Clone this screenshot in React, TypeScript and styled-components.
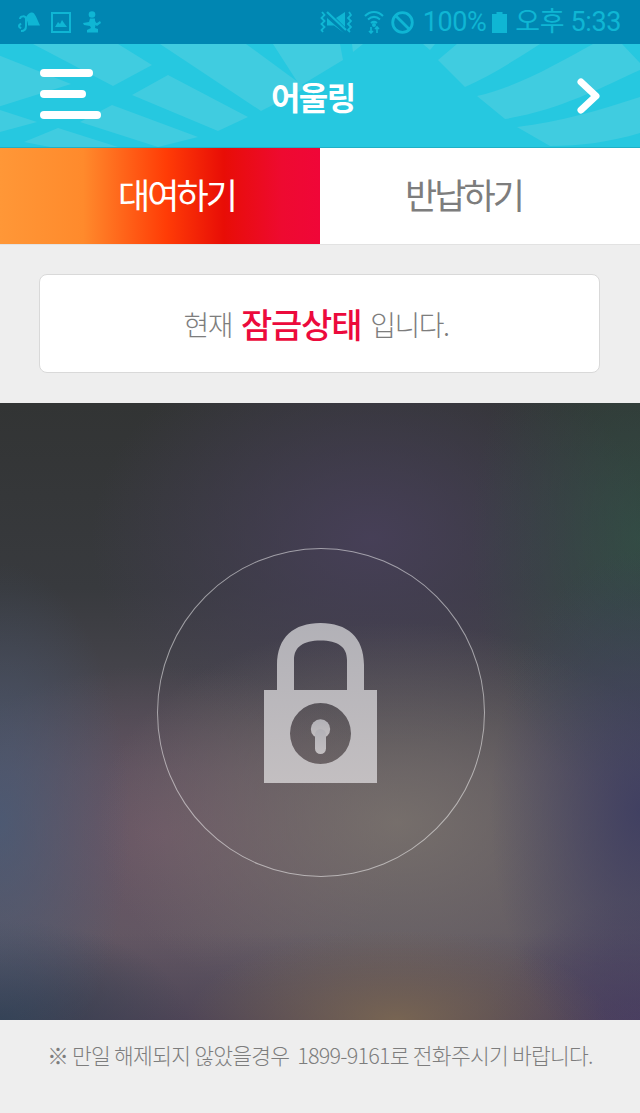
import React from "react";
import styled, { createGlobalStyle } from "styled-components";

const GlobalStyle = createGlobalStyle`
  html, body {
    margin: 0;
    padding: 0;
    background: #eeeeee;
  }
  * {
    box-sizing: border-box;
  }
`;

const Page = styled.div`
  width: 640px;
  height: 1113px;
  display: flex;
  flex-direction: column;
  overflow: hidden;
  background: #eeeeee;
  font-family: "Noto Sans CJK KR", "Noto Sans", sans-serif;
`;

const StatusBar = styled.div`
  height: 44px;
  flex: none;
  display: flex;
  align-items: center;
  justify-content: space-between;
  padding: 0 19px 0 18px;
  background: #0086b2;
  color: #0fb6d4;
`;

const StatusGroup = styled.div<{ $gap: number; $mr?: number }>`
  display: flex;
  align-items: center;
  gap: ${(p) => p.$gap}px;
  margin-right: ${(p) => p.$mr ?? 0}px;
`;

const StatusText = styled.span`
  font-family: Roboto, "Noto Sans CJK KR", sans-serif;
  font-size: 27px;
  line-height: 44px;
  white-space: nowrap;
  letter-spacing: -0.4px;
`;

const BatteryIcon = styled.svg`
  margin: 0 3px 0 1px;
`;

const Header = styled.header`
  position: relative;
  height: 104px;
  flex: none;
  display: flex;
  align-items: center;
  padding: 0 40px;
  background: #26c8e0;
  border-bottom: 1px solid #1fb0c6;
  overflow: hidden;
`;

const Pattern = styled.svg`
  position: absolute;
  left: 0;
  top: 0;
`;

const MenuButton = styled.div`
  position: relative;
  width: 61px;
  margin-top: -3px;
  display: flex;
  flex-direction: column;
  gap: 13px;
`;

const MenuBar = styled.span<{ $w: number }>`
  display: block;
  width: ${(p) => p.$w}px;
  height: 8px;
  border-radius: 4px;
  background: #ffffff;
`;

const Title = styled.h1`
  position: relative;
  margin: 0 0 0 170px;
  color: #ffffff;
  font-size: 32px;
  font-weight: 700;
  letter-spacing: -1.6px;
  line-height: 44px;
`;

const NextIcon = styled.svg`
  position: relative;
  margin: 0 -1px 0 auto;
`;

const Tabs = styled.div`
  height: 97px;
  flex: none;
  display: flex;
  border-bottom: 1px solid #e2e2e2;
`;

const Tab = styled.div<{ $active?: boolean }>`
  width: 320px;
  height: 96px;
  padding: ${(p) => (p.$active ? "0 0 5px 33px" : "0 33px 5px 0")};
  display: flex;
  align-items: center;
  justify-content: center;
  font-size: 35px;
  font-weight: 400;
  letter-spacing: -3px;
  color: ${(p) => (p.$active ? "#ffffff" : "#7d7d7d")};
  background: ${(p) =>
    p.$active
      ? "linear-gradient(90deg, #ff9737 0%, #ff8a2c 26%, #ff3c06 52%, #e80d06 70%, #ee0a30 88%, #f00638 100%)"
      : "#ffffff"};
`;

const NoticeArea = styled.div`
  height: 158px;
  flex: none;
  padding: 29px 40px 30px 39px;
`;

const NoticeCard = styled.div`
  height: 99px;
  padding-right: 7px;
  display: flex;
  align-items: center;
  justify-content: center;
  gap: 9px;
  background: #ffffff;
  border: 1px solid #d9d9d9;
  border-radius: 8px;
  color: #7d7d7d;
  font-size: 28px;
  font-weight: 300;
  letter-spacing: -1.5px;
`;

const LockedLabel = styled.strong`
  color: #ec0a3c;
  font-size: 34px;
  font-weight: 500;
  letter-spacing: -1.2px;
`;

const Photo = styled.div`
  height: 617px;
  flex: none;
  display: flex;
  align-items: center;
  justify-content: center;
  background:
    radial-gradient(ellipse 130px 260px at 0% 68%, rgba(70, 92, 122, 0.7) 0%, rgba(70, 92, 122, 0.3) 55%, transparent 100%),
    radial-gradient(ellipse 150px 260px at 100% 66%, rgba(62, 62, 98, 0.9) 0%, rgba(62, 62, 98, 0.4) 55%, transparent 100%),
    radial-gradient(ellipse 170px 260px at 100% 22%, rgba(48, 88, 74, 0.6) 0%, rgba(48, 88, 74, 0.25) 55%, transparent 100%),
    radial-gradient(ellipse 210px 90px at 62% 100%, rgba(124, 104, 82, 0.9) 0%, rgba(124, 104, 82, 0.4) 55%, transparent 100%),
    radial-gradient(ellipse 150px 120px at 100% 100%, rgba(76, 62, 98, 0.85) 0%, rgba(76, 62, 98, 0.35) 55%, transparent 100%),
    radial-gradient(ellipse 190px 100px at 0% 100%, rgba(48, 62, 80, 0.95) 0%, rgba(48, 62, 80, 0.4) 55%, transparent 100%),
    linear-gradient(0deg, rgba(72, 62, 82, 0.75) 0%, transparent 14%),
    radial-gradient(ellipse 300px 200px at 62% 68%, rgba(128, 120, 112, 0.75) 0%, rgba(128, 120, 112, 0.35) 55%, transparent 100%),
    radial-gradient(ellipse 250px 170px at 25% 70%, rgba(112, 88, 104, 0.8) 0%, rgba(112, 88, 104, 0.35) 55%, transparent 100%),
    radial-gradient(ellipse 280px 210px at 58% 22%, rgba(72, 64, 90, 0.9) 0%, rgba(72, 64, 90, 0.4) 55%, transparent 100%),
    linear-gradient(180deg, #323434 0%, #383a3e 30%, #544f5a 60%, #625a64 100%);
`;

const LockRing = styled.div`
  width: 328px;
  height: 329px;
  margin: 1px 0 0 2px;
  display: flex;
  align-items: center;
  justify-content: center;
  border: 1px solid rgba(255, 255, 255, 0.5);
  border-radius: 50%;
`;

const LockIcon = styled.svg`
  margin: 0 1px 18px 0;
`;

const Footer = styled.footer`
  flex: 1;
  padding-top: 19px;
  text-align: center;
  color: #7d7d7d;
  font-size: 21.5px;
  font-weight: 300;
  line-height: 32px;
  letter-spacing: -0.75px;
  white-space: nowrap;
`;

const headerShapes = [
  "M33 44 L118 44 L152 65 L113 86 Z",
  "M-2 55 L71 84 L-2 107 Z",
  "M160 44 L246 44 L306 88 L261 111 Z",
  "M273 44 L340 44 L343 60 L300 86 Z",
  "M132 95 L168 75 L248 117 L218 131 Z",
  "M0 110 L37 122 L0 132 Z",
  "M80 122 L112 105 L198 137 L158 147 Z",
  "M24 142 L58 128 L118 147 L50 147 Z",
  "M352 44 L363 44 L353 52 Z",
  "M423 44 L435 44 L430 50 Z",
  "M438 60 L457 44 L540 44 C515 60 490 76 465 87 Z",
  "M477 96 C520 86 560 62 593 44 L622 44 L640 63 L640 70 C600 88 560 110 505 119 Z",
  "M517 127 C560 122 600 110 640 97 L640 133 C610 142 580 146 550 146 Z",
];

const NotificationIcons = () => (
  <StatusGroup $gap={11}>
    <svg width="22" height="22" viewBox="0 0 22 22" fill="currentColor">
      <path d="M7 8 C9 4 11 1.5 14 1.5 C17 1.5 19 8 22 14.5 H10 C10 11 9 9 7 8 Z" />
      <path d="M2 8 C2 5 8 4 8 8 V15 C8 19 6 20 3 20 M0.5 15 L3 12.5 M0.5 15 L3 17.5" fill="none" stroke="currentColor" strokeWidth="2" />
    </svg>
    <svg width="20" height="21" viewBox="0 0 20 21" fill="currentColor">
      <path d="M1 1 H19 V20 H1 Z" fill="none" stroke="currentColor" strokeWidth="2" />
      <path d="M4 15 L7 10 L9 12 L11 8 L13 11 L16 15 Z" />
    </svg>
    <svg width="19" height="23" viewBox="0 0 19 23" fill="currentColor">
      <circle cx="10" cy="3.5" r="3.3" />
      <path d="M8 7.5 H13 C12.5 10 14 12 15 12 L18 10 L19 12 L15 15 L13.5 14 L13 17 L16 18 V21.5 H5 V19 L9 17 L8 15 L2 14 L1 12 L7 11 Z" />
    </svg>
  </StatusGroup>
);

const SystemIcons = () => (
  <StatusGroup $gap={5}>
    <StatusGroup $gap={7} $mr={4}>
      <StatusGroup $gap={12}>
        <svg width="33" height="24" viewBox="0 0 33 24" fill="currentColor">
          <path d="M17 8 L26 2 V17 Z" />
          <path d="M8 8 L25 23 L15 15.5 H8 Z" />
          <path d="M8 2 L27 20" fill="none" stroke="currentColor" strokeWidth="2.2" />
          <path d="M3 2 L5.5 5 L2.5 8 L5.5 11 L2.5 14 L5.5 17 L2.5 20 L4 22 M30 2 L32 5 L29 8 L32 11 L29 14 L32 17 L29 20 L31 22" fill="none" stroke="currentColor" strokeWidth="1.8" />
        </svg>
        <svg width="20" height="24" viewBox="0 0 20 24" fill="none" stroke="currentColor" strokeWidth="2">
          <path d="M1 6 C6 0.5 14 0.5 19 6" />
          <path d="M4 9.5 C8 6 12 6 16 9.5" />
          <path d="M7 13 C9 11.5 11 11.5 13 13" />
          <circle cx="10" cy="15" r="1" fill="currentColor" />
          <path d="M7 17 V23 M5 21 L7 23 L9 21 M13 23 V17 M11 19 L13 17 L15 19" strokeWidth="1.6" />
        </svg>
      </StatusGroup>
      <svg width="23" height="23" viewBox="0 0 23 23" fill="none" stroke="currentColor" strokeWidth="2.8">
        <circle cx="11.5" cy="11.5" r="9.8" />
        <path d="M4.7 4.7 L18.3 18.3" />
      </svg>
    </StatusGroup>
    <StatusText>100%</StatusText>
    <BatteryIcon width="15" height="21" viewBox="0 0 15 21" fill="currentColor">
      <path d="M4.5 0 H10.5 V2 H15 V21 H0 V2 H4.5 Z" />
    </BatteryIcon>
    <StatusText>오후 5:33</StatusText>
  </StatusGroup>
);

const App = () => {
  return (
    <Page>
      <GlobalStyle />
      <StatusBar>
        <NotificationIcons />
        <SystemIcons />
      </StatusBar>
      <Header>
        <Pattern width="640" height="104" viewBox="0 44 640 104" fill="#40cce0">
          {headerShapes.map((d) => (
            <path key={d} d={d} />
          ))}
        </Pattern>
        <MenuButton>
          <MenuBar $w={53} />
          <MenuBar $w={46} />
          <MenuBar $w={61} />
        </MenuButton>
        <Title>어울링</Title>
        <NextIcon width="24" height="36" viewBox="0 0 24 36" fill="none" stroke="#ffffff" strokeWidth="7" strokeLinecap="round" strokeLinejoin="round">
          <path d="M4 4 L19 18 L4 32" />
        </NextIcon>
      </Header>
      <Tabs>
        <Tab $active>대여하기</Tab>
        <Tab>반납하기</Tab>
      </Tabs>
      <NoticeArea>
        <NoticeCard>
          <span>현재</span>
          <LockedLabel>잠금상태</LockedLabel>
          <span>입니다.</span>
        </NoticeCard>
      </NoticeArea>
      <Photo>
        <LockRing>
          <LockIcon width="113" height="160" viewBox="0 0 113 160">
            <defs>
              <linearGradient id="lockFill" x1="0" y1="0" x2="0" y2="1">
                <stop offset="0" stopColor="#b2b1b7" />
                <stop offset="1" stopColor="#c3bfc1" />
              </linearGradient>
            </defs>
            <path
              fillRule="evenodd"
              fill="url(#lockFill)"
              d="M13 67 V42 C13 14 30 0 56.5 0 C83 0 100 14 100 42 V67 H113 V160 H0 V67 Z M30 67 H83 V37 C83 24 74 17.5 56.5 17.5 C39 17.5 30 24 30 37 Z M26 110.5 a30.5 30.5 0 1 0 61 0 a30.5 30.5 0 1 0 -61 0 Z"
            />
            <circle cx="56.5" cy="106" r="9.7" fill="url(#lockFill)" />
            <rect x="51" y="106" width="11" height="25" rx="5.5" fill="url(#lockFill)" />
          </LockIcon>
        </LockRing>
      </Photo>
      <Footer>※ 만일 해제되지 않았을경우&nbsp; 1899-9161로 전화주시기 바랍니다.</Footer>
    </Page>
  );
};

export default App;
